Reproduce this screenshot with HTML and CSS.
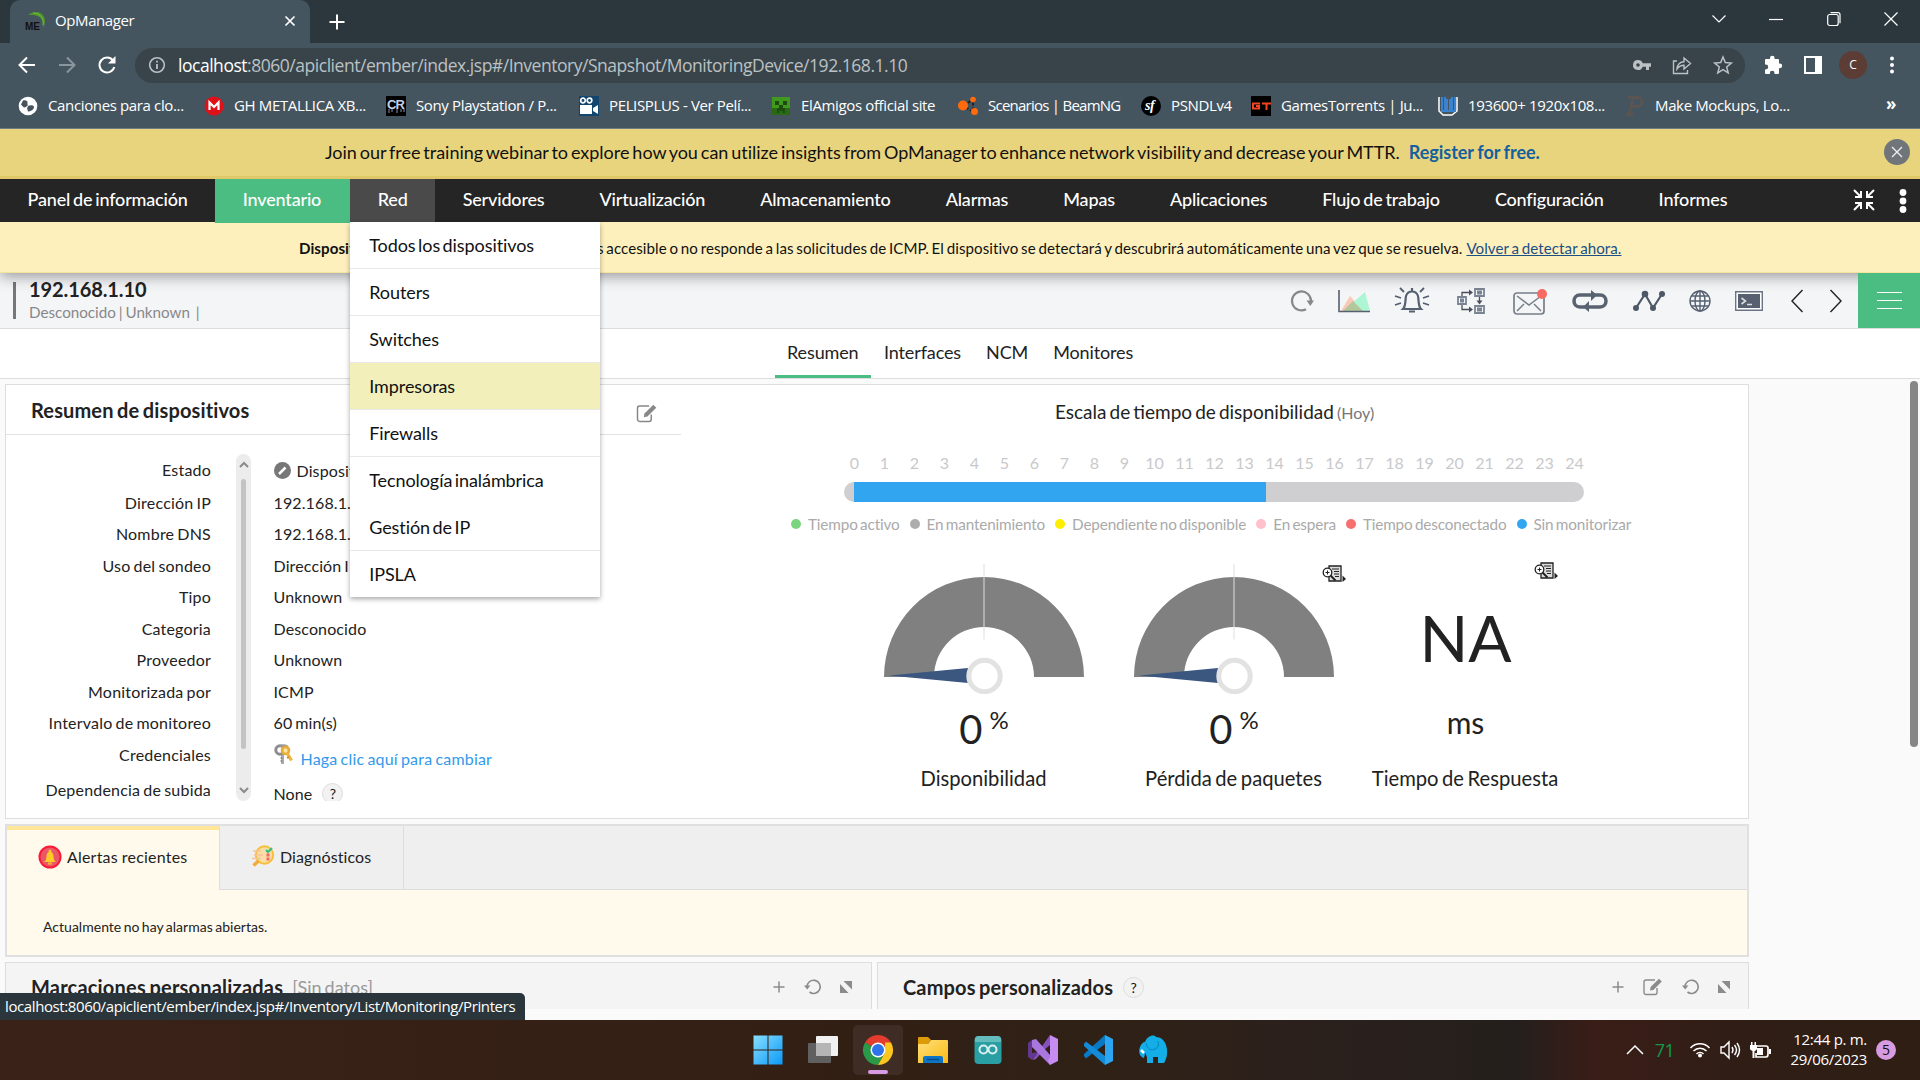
FILE: index.html
```html
<!DOCTYPE html>
<html lang="es">
<head>
<meta charset="utf-8">
<title>OpManager</title>
<link rel="stylesheet" href="styles.css">
</head>
<body>
<svg class="defs" width="0" height="0">
  <defs>
    <symbol id="edit" viewBox="0 0 20 18"><path d="M14 10v4.5a2 2 0 0 1-2 2H3a2 2 0 0 1-2-2V4a2 2 0 0 1 2-2h9" fill="none" stroke="currentColor" stroke-width="1.4"/><path d="M7 12.5l.6-3.4L16 .8l2.8 2.7-8.4 8.4z" fill="currentColor"/></symbol>
    <symbol id="undo" viewBox="0 0 18 18"><path d="M3 9a6.6 6.6 0 1 1 2.5 5" fill="none" stroke="currentColor" stroke-width="1.6"/><path d="M0 7.5h6.4L3.2 11.6z" fill="currentColor"/></symbol>
    <symbol id="expand" viewBox="0 0 12 12"><path d="M3.5 0H12v8.500zM0 3v9h8.500z" fill="currentColor"/></symbol>
    <symbol id="plus" viewBox="0 0 12 12"><path d="M6 .5v11M.5 6h11" stroke="currentColor" stroke-width="1.5"/></symbol>
    <symbol id="report" viewBox="0 0 24 18"><path d="M7 1h12v15H7z" fill="#ddd" stroke="#222" stroke-width="1.3"/><path d="M10 4h7M12 6.500h5M12 9h5M13 11.500h4" stroke="#222" stroke-width="1.2"/><circle cx="5.500" cy="7.500" r="4.300" fill="#fff" stroke="#222" stroke-width="1.300"/><path d="M5.500 5.500v4M3.500 7.500h4" stroke="#222"/><path d="M8.500 10.500l5 5" stroke="#222" stroke-width="2"/><path d="M20.500 10.500l3.500 3.500-3.500 3z" fill="#222"/></symbol>
    <symbol id="gauge" viewBox="0 0 200 130"><path d="M0 113a100 100 0 0 1 200 0h-50a50 50 0 0 0-100 0z" fill="#808080"/><path d="M100 0v75.500" stroke="#dedede"/><path d="M5 111.500l79-7.500v15z" fill="#3b5780"/><circle cx="100.500" cy="112" r="15.700" fill="#fff" stroke="#e2e2e2" stroke-width="5"/></symbol>
  </defs>
</svg>

<div class="tabstrip">
  <div class="tab">
    <svg width="22" height="22" viewBox="0 0 22 22"><path d="M3 5C10-1 20 2 20 11c0 3-1 5-2 7 1-6 0-14-15-13z" fill="#4c962b"/><path d="M8 3c8 0 11 6 10 12" fill="none" stroke="#79bb3d"/><text x="0" y="20" class="me">ME</text></svg>
    <span class="tab-title">OpManager</span>
    <svg width="12" height="12" viewBox="0 0 12 12"><path d="M1.500 1.500l9 9M10.500 1.500l-9 9" stroke="#fff" stroke-width="1.700"/></svg>
  </div>
  <svg class="newtab" width="16" height="16" viewBox="0 0 16 16"><path d="M8 .5v15M.5 8h15" stroke="#fff" stroke-width="2"/></svg>
  <div class="winctl">
    <svg width="14" height="14" viewBox="0 0 14 14"><path d="M.5 3.500L7 10l6.500-6.500"/></svg>
    <svg width="14" height="14" viewBox="0 0 14 14"><path d="M0 7.500h14"/></svg>
    <svg width="14" height="14" viewBox="0 0 14 14"><rect x=".7" y="2.500" width="10.500" height="11" rx="2"/><path d="M3.500.7h7.500a2 2 0 0 1 2 2v8.500"/></svg>
    <svg width="14" height="14" viewBox="0 0 14 14"><path d="M.5.5l13 13M13.500.5l-13 13"/></svg>
  </div>
</div>

<div class="toolbar">
  <div class="navbtns">
    <svg width="18" height="18" viewBox="0 0 18 18"><path d="M17 9H2M9 1.500L1.500 9 9 16.500" fill="none" stroke="#fff" stroke-width="2"/></svg>
    <svg width="18" height="18" viewBox="0 0 18 18"><path d="M1 9h15M9 1.500L16.500 9 9 16.500" fill="none" stroke="#8a969c" stroke-width="2"/></svg>
    <svg width="18" height="18" viewBox="0 0 18 18"><path d="M15 4.500A7.500 7.500 0 1 0 16.300 11" fill="none" stroke="#fff" stroke-width="2"/><path d="M17.500 0v7.500H10z" fill="#fff"/></svg>
  </div>
  <div class="omnibox">
    <svg width="18" height="18" viewBox="0 0 18 18"><circle cx="9" cy="9" r="7.300" fill="none" stroke="#bcc1c4" stroke-width="1.600"/><path d="M9 8v5M9 4.800v1.800" stroke="#bcc1c4" stroke-width="1.800"/></svg>
    <span class="url"><b>localhost</b>:8060/apiclient/ember/index.jsp#/Inventory/Snapshot/MonitoringDevice/192.168.1.10</span>
    <div class="omni-icons">
      <svg width="18" height="18" viewBox="0 0 18 18"><path fill="#bcc1c4" fill-rule="evenodd" d="M5 4a5 5 0 1 0 4.700 6.700H13V14h3v-3.300h2V7.300H9.700A5 5 0 0 0 5 4zm0 3.200a1.800 1.800 0 1 1 0 3.600 1.800 1.800 0 0 1 0-3.600z"/></svg>
      <svg width="20" height="20" viewBox="0 0 20 20"><path d="M5 6H1.500v12.500h14V15M5 14c.5-5 3-7 7-7.200V3l6.500 5.500-6.500 5.500v-3.700c-3 0-5 1-7 3.700z" fill="none" stroke="#bcc1c4" stroke-width="1.400"/></svg>
      <svg width="20" height="20" viewBox="0 0 20 20"><path d="M10 2l2.300 5.600 6 .5-4.600 3.900 1.500 5.900L10 14.700 4.800 17.900 6.300 12 1.700 8.100l6-.5z" fill="none" stroke="#bcc1c4" stroke-width="1.500"/></svg>
    </div>
  </div>
  <div class="ext">
    <svg width="20" height="20" viewBox="0 0 20 20"><path fill="#fff" d="M7 4V3a2.300 2.300 0 0 1 4.600 0v1H15a1 1 0 0 1 1 1v3.400h.8a2.400 2.400 0 0 1 0 4.800H16V18a1 1 0 0 1-1 1h-3.500v-1a2.300 2.300 0 0 0-4.600 0v1H3a1 1 0 0 1-1-1v-3.600h.8a2.400 2.400 0 0 0 0-4.800H2V5a1 1 0 0 1 1-1z"/></svg>
    <svg width="20" height="20" viewBox="0 0 20 20"><path d="M2 2h16v16H2z" fill="none" stroke="#fff" stroke-width="2"/><path d="M12 2h6v16h-6z" fill="#fff"/></svg>
    <span class="avatar">C</span>
    <svg width="6" height="20" viewBox="0 0 6 20"><g fill="#fff"><circle cx="3" cy="3.500" r="2"/><circle cx="3" cy="10" r="2"/><circle cx="3" cy="16.500" r="2"/></g></svg>
  </div>
</div>

<div class="bookmarks">
  <a><svg width="20" height="20" viewBox="0 0 20 20"><circle cx="10" cy="10" r="9.300" fill="#fff"/><path d="M5 4.500c3-.5 5 .5 4.500 2.500s1.500 2-1 3.500S6 12 3 8.500zM10 10c2-1 6-1 6 1s-2 4-5 4.500c-2 .3-1-2-2-3z" fill="#45545d"/></svg><span>Canciones para clo...</span></a>
  <a><svg width="20" height="20" viewBox="0 0 20 20"><circle cx="10" cy="10" r="9.500" fill="#e01019"/><path d="M5.500 14V6.500l4.500 4.500 4.500-4.500V14" fill="none" stroke="#fff" stroke-width="2.200"/></svg><span>GH METALLICA XB...</span></a>
  <a><svg width="20" height="20" viewBox="0 0 20 20"><path d="M0 0h20v20H0z" fill="#000"/><text x="1" y="13" class="cr">CR</text><path d="M3 13v4M6 13v3M11 13v4M15 13v3M18 13v3" stroke="#8795ab"/></svg><span>Sony Playstation / P...</span></a>
  <a><svg width="20" height="20" viewBox="0 0 20 20"><path d="M0 0h20v20H0z" fill="#12466e"/><g fill="#fff"><path d="M1 9h12v9H1zM14 12l5-3v9l-5-3z"/></g><g fill="none" stroke="#fff" stroke-width="1.700"><circle cx="4" cy="4.500" r="2.300"/><circle cx="10.500" cy="4.500" r="2.300"/></g></svg><span>PELISPLUS - Ver Pelí...</span></a>
  <a><svg width="20" height="20" viewBox="0 0 20 20"><path d="M1 1h18v18H1z" fill="#3f9a1d"/><path d="M1 12h18v7H1z" fill="#2b6a15"/><path d="M4 5h4v4H4zM12 5h4v4h-4zM8 9h4v3h2v5h-2v-2H8v2H6v-5h2z" fill="#1d4c10"/></svg><span>ElAmigos official site</span></a>
  <a><svg width="20" height="20" viewBox="0 0 20 20"><path d="M6 10L15 3v13z" fill="none" stroke="#222" stroke-width="2" stroke-dasharray="3 2"/><g fill="#ff6a0c"><circle cx="5" cy="9.500" r="5"/><circle cx="15" cy="3.500" r="2.800"/><circle cx="16.500" cy="15.500" r="3.500"/></g></svg><span class="tight">Scenarios | BeamNG</span></a>
  <a><svg width="20" height="20" viewBox="0 0 20 20"><circle cx="10" cy="10" r="10" fill="#000"/><text x="4" y="14" class="sf">sf</text></svg><span>PSNDLv4</span></a>
  <a><svg width="20" height="20" viewBox="0 0 20 20"><path d="M0 0h20v20H0z" fill="#000"/><path d="M9 7.500H2v5h6V10H5M11 7.500h9M15.500 7.500V14" fill="none" stroke="#f0451e" stroke-width="2"/></svg><span>GamesTorrents | Ju...</span></a>
  <a><svg width="20" height="20" viewBox="0 0 20 20"><path d="M1 1v14l4 4h9l5-4V1" fill="none" stroke="#fff" stroke-width="1.500"/><path d="M4 1v14h3V1M9 3v12h3V3M14 1v14h3V1" fill="none" stroke="#3c83cf" stroke-width="2"/></svg><span>193600+ 1920x108...</span></a>
  <a><svg width="20" height="20" viewBox="0 0 20 20"><path d="M3 1.500h10c6 0 5 9-1 9H6M8 2L4.500 18M1 18.500h7" fill="none" stroke="#5a5453" stroke-width="3"/></svg><span>Make Mockups, Lo...</span></a>
  <b class="more">»</b>
</div>

<div class="promo">
  <span class="promo-text">Join our free training webinar to explore how you can utilize insights from OpManager to enhance network visibility and decrease your MTTR.</span>
  <b>Register for free.</b>
  <svg class="promo-close" width="26" height="26" viewBox="0 0 26 26"><circle cx="13" cy="13" r="13" fill="#70757a"/><path d="M8 8l10 10M18 8L8 18" stroke="#eee" stroke-width="1.400"/></svg>
</div>

<div class="mainnav">
  <div class="navitem">Panel de información</div>
  <div class="navitem active">Inventario</div>
  <div class="navitem open">Red
    <div class="menu">
      <div>Todos los dispositivos</div><div>Routers</div><div>Switches</div><div class="hover">Impresoras</div><div>Firewalls</div><div class="noline">Tecnología inalámbrica</div><div>Gestión de IP</div><div>IPSLA</div>
    </div>
  </div>
  <div class="navitem">Servidores</div><div class="navitem">Virtualización</div><div class="navitem">Almacenamiento</div><div class="navitem">Alarmas</div><div class="navitem">Mapas</div><div class="navitem">Aplicaciones</div><div class="navitem">Flujo de trabajo</div><div class="navitem">Configuración</div><div class="navitem">Informes</div>
  <div class="navtools">
    <svg width="22" height="22" viewBox="0 0 22 22"><g fill="none" stroke="#fff" stroke-width="2"><path d="M1 1l6 6M2 8h6V2M21 1l-6 6M14 2v6h6M1 21l6-6M2 14h6v6M21 21l-6-6M20 14h-6v6"/></g></svg>
    <svg width="8" height="24" viewBox="0 0 8 24"><g fill="#fff"><circle cx="4" cy="3.500" r="3.400"/><circle cx="4" cy="12" r="3.400"/><circle cx="4" cy="20.500" r="3.400"/></g></svg>
  </div>
</div>

<div class="notice">
  <b>Dispositivo</b>
  <span>s accesible o no responde a las solicitudes de ICMP. El dispositivo se detectará y descubrirá automáticamente una vez que se resuelva.</span>
  <u>Volver a detectar ahora.</u>
</div>

<div class="devhead">
  <div class="devname"><strong>192.168.1.10</strong><span>Desconocido | Unknown &nbsp;|</span></div>
  <div class="devicons">
    <svg width="24" height="24" viewBox="0 0 24 24"><path d="M16 20.300A9.500 9.500 0 1 1 21 12" fill="none" stroke="#888" stroke-width="2.200"/><path d="M16.500 11.500H24l-3.700 5.500z" fill="#888"/></svg>
    <svg width="32" height="24" viewBox="0 0 32 24"><path d="M3 22L12 7l13 15z" fill="#f9c9b5"/><path d="M5 22L27 3l5 19z" fill="#aef5d5"/><path d="M5 22l10-10 10 10z" fill="#b3c79c"/><path d="M1 1v21.500h31" fill="none" stroke="#566071" stroke-width="1.600"/></svg>
    <svg width="34" height="28" viewBox="0 0 34 28"><path d="M8 22h18c-3-3-2-8-3-13-2-6-10-6-12 0-1 5 0 10-3 13zM17 4V1M14 24.500h6" fill="none" stroke="#566071" stroke-width="2.200"/><path d="M5 1l4 4M0 9l6 2M0 18l6-2M29 1l-4 4M34 9l-6 2M34 18l-6-2" stroke="#566071" stroke-width="1.800"/></svg>
    <svg width="28" height="26" viewBox="0 0 28 26"><g fill="none" stroke="#7b8492" stroke-width="1.800"><path d="M1 9h8v7H1zM18 1h9v7h-9zM18 18h9v7h-9zM3 11.500h4M3 13.500h4M20 3.500h5M20 5.500h5M20 20.500h5M20 22.500h5"/></g><path d="M5 8V4.500h8M5 17v4.500h8M22.500 9v4" fill="none" stroke="#4a505a" stroke-width="1.300"/><path d="M12 1.500l4 3-4 3zM12 18.500l4 3-4 3zM19.500 12.500h6l-3 4z" fill="#4a505a"/></svg>
    <svg width="32" height="28" viewBox="0 0 32 28"><rect x="1" y="6" width="30" height="21" rx="3" fill="none" stroke="#777f89" stroke-width="1.700"/><path d="M4 9l12 9L28 9M4 24l7-7M28 24l-7-7" fill="none" stroke="#777f89" stroke-width="1.500"/><circle cx="29" cy="7" r="5" fill="#f76b64"/></svg>
    <svg width="36" height="20" viewBox="0 0 36 20"><path d="M13 16H8c-8 0-8-12 0-12h14M23 4h5c8 0 8 12 0 12H14" fill="none" stroke="#596271" stroke-width="3.500"/><path d="M19-1l6 5-6 6zM17 10l-6 6 6 5z" fill="#596271"/></svg>
    <svg width="32" height="22" viewBox="0 0 32 22"><path d="M3 18l9-14 8 14 9-14" fill="none" stroke="#4d5766" stroke-width="2.200"/><g fill="#4d5766"><circle cx="3" cy="18" r="3"/><circle cx="12" cy="4" r="3.300"/><circle cx="20" cy="18" r="3"/><circle cx="29" cy="4" r="3"/></g></svg>
    <svg width="22" height="22" viewBox="0 0 22 22"><g fill="none" stroke="#566071" stroke-width="1.400"><circle cx="11" cy="11" r="10"/><ellipse cx="11" cy="11" rx="5" ry="10"/><path d="M11 1v20M1 11h20M2.500 6h17M2.500 16h17"/></g></svg>
    <svg width="28" height="20" viewBox="0 0 28 20"><path d="M.7.7h26.600v18.600H.7z" fill="#fff" stroke="#6a7484" stroke-width="1.400"/><path d="M3 3h22v14H3z" fill="#566071"/><path d="M6.500 7l4 3-4 3M12 13.500h5" fill="none" stroke="#ddd" stroke-width="1.600"/></svg>
    <svg width="14" height="24" viewBox="0 0 14 24"><path d="M12.500 1L2 12l10.500 11" fill="none" stroke="#222" stroke-width="1.400"/></svg>
    <svg width="14" height="24" viewBox="0 0 14 24"><path d="M1.500 1L12 12 1.500 23" fill="none" stroke="#222" stroke-width="1.400"/></svg>
  </div>
  <div class="burger"><i></i><i></i><i></i></div>
</div>

<div class="subtabs"><div class="on">Resumen</div><div>Interfaces</div><div>NCM</div><div>Monitores</div></div>

<div class="content">
  <section class="panel">
    <div class="summary">
      <div class="sumhead"><h2>Resumen de dispositivos</h2><svg width="22" height="19"><use href="#edit"/></svg></div>
      <div class="sumbody">
        <div class="col labels">
          <div class="first">Estado</div><div>Dirección IP</div><div>Nombre DNS</div><div>Uso del sondeo</div><div>Tipo</div><div>Categoria</div><div>Proveedor</div><div>Monitorizada por</div><div>Intervalo de monitoreo</div><div>Credenciales</div><div class="dep">Dependencia de subida</div>
        </div>
        <div class="vscroll">
          <svg width="10" height="7" viewBox="0 0 10 7"><path d="M1 6l4-4 4 4" fill="none" stroke="#8a8a8a" stroke-width="2"/></svg>
          <i></i>
          <svg width="10" height="7" viewBox="0 0 10 7"><path d="M1 1l4 4 4-4" fill="none" stroke="#8a8a8a" stroke-width="2"/></svg>
        </div>
        <div class="col values">
          <div class="first status"><svg width="17" height="17" viewBox="0 0 17 17"><circle cx="8.500" cy="8.500" r="8.500" fill="#777"/><path d="M5 12l6.500-6.500" stroke="#fff" stroke-width="2.500"/></svg>Dispositivo</div><div>192.168.1.10</div><div>192.168.1.10</div><div>Dirección IP</div><div>Unknown</div><div>Desconocido</div><div>Unknown</div><div>ICMP</div><div>60 min(s)</div>
          <div class="cred"><svg width="20" height="21" viewBox="0 0 20 21"><path d="M8.500 9v11" stroke="#aaa" stroke-width="3"/><path d="M6.500 14h2M6.500 17h2" stroke="#888" stroke-width="1.500"/><circle cx="6" cy="6" r="4.200" fill="none" stroke="#8d8d8d" stroke-width="3"/><path d="M6 2q5-2 8 1" fill="none" stroke="#999" stroke-width="2"/><circle cx="11.500" cy="6.500" r="3.500" fill="#fbe3a4" stroke="#e8ab33" stroke-width="2.600"/><path d="M13 9l4.500 7.500" stroke="#efb43f" stroke-width="3.200"/><path d="M13 14l2-1" stroke="#c98a1b" stroke-width="1.500"/></svg><a>Haga clic aquí para cambiar</a></div>
          <div class="none">None<span class="help">?</span></div>
        </div>
      </div>
    </div>
    <div class="avail">
      <h3>Escala de tiempo de disponibilidad <small>(Hoy)</small></h3>
      <div class="hours"><i>0</i><i>1</i><i>2</i><i>3</i><i>4</i><i>5</i><i>6</i><i>7</i><i>8</i><i>9</i><i>10</i><i>11</i><i>12</i><i>13</i><i>14</i><i>15</i><i>16</i><i>17</i><i>18</i><i>19</i><i>20</i><i>21</i><i>22</i><i>23</i><i>24</i></div>
      <div class="bar"><i style="width:412px"></i></div>
      <div class="legend"><span class="up">Tiempo activo</span><span class="mt">En mantenimiento</span><span class="dp">Dependiente no disponible</span><span class="hold">En espera</span><span class="down">Tiempo desconectado</span><span class="un">Sin monitorizar</span></div>
      <div class="gauges">
        <div class="g"><svg width="200" height="130"><use href="#gauge"/></svg><div class="val">0<sup>%</sup></div><p>Disponibilidad</p></div>
        <div class="g"><svg width="200" height="130"><use href="#gauge"/></svg><svg class="rep r1" width="24" height="18"><use href="#report"/></svg><div class="val">0<sup>%</sup></div><p>Pérdida de paquetes</p></div>
        <div class="g na"><svg class="rep r2" width="24" height="18"><use href="#report"/></svg><div class="big">NA</div><div class="ms">ms</div><p>Tiempo de Respuesta</p></div>
      </div>
    </div>
  </section>

  <section class="alerts">
    <div class="atabs">
      <div class="atab on"><svg width="24" height="24" viewBox="0 0 24 24"><circle cx="12" cy="12" r="10.500" fill="#ea5868" stroke="#fb1a36" stroke-width="2"/><path d="M6 17c3-2 2-5 3-8s5-3 6 0 0 6 3 8z" fill="#ffc928"/><circle cx="12" cy="6" r="1.500" fill="#ffc928"/><path d="M10 17.500h4v2h-4z" fill="#f9b42c"/></svg>Alertas recientes</div>
      <div class="atab two"><svg width="24" height="24" viewBox="0 0 24 24"><circle cx="13.500" cy="10" r="8.700" fill="#f9dfa6" stroke="#f6bf3a" stroke-width="2"/><path d="M7.500 16l-5 4.500" stroke="#f3ab35" stroke-width="3.500"/><path d="M2 6h8M3 10h9M1 13.500h9" stroke="#f6c39b" stroke-width="1.300"/><path d="M15 5l2 2 4-4" fill="none" stroke="#2fbf7e" stroke-width="2"/><path d="M15.500 10h3M15.500 14h3" stroke="#f7626e" stroke-width="3"/></svg>Diagnósticos</div>
      <div class="rest"></div>
    </div>
    <p>Actualmente no hay alarmas abiertas.</p>
  </section>

  <div class="widgets">
    <section class="w1"><h2>Marcaciones personalizadas</h2><small>[Sin datos]</small><span class="grow"></span><svg width="12" height="12"><use href="#plus"/></svg><svg class="s2" width="18" height="18"><use href="#undo"/></svg><svg class="s3" width="12" height="12"><use href="#expand"/></svg></section>
    <section class="w2"><h2>Campos personalizados</h2><span class="help">?</span><span class="grow"></span><svg width="12" height="12"><use href="#plus"/></svg><svg class="s1" width="20" height="18"><use href="#edit"/></svg><svg class="s2" width="18" height="18"><use href="#undo"/></svg><svg class="s3" width="12" height="12"><use href="#expand"/></svg></section>
  </div>
  <div class="pagescroll"></div>
  <div class="linkstatus">localhost:8060/apiclient/ember/index.jsp#/Inventory/List/Monitoring/Printers</div>
</div>

<div class="taskbar">
  <div class="apps">
    <svg width="30" height="30" viewBox="0 0 30 30"><defs><linearGradient id="wg" gradientUnits="userSpaceOnUse" x2="30" y2="30"><stop stop-color="#8be0ff"/><stop offset="1" stop-color="#0897f7"/></linearGradient></defs><path d="M.5.5h14v14H.5zM15.500.5h14v14h-14zM.5 15.500h14v14H.5zM15.500 15.500h14v14h-14z" fill="url(#wg)"/></svg>
    <svg width="30" height="30" viewBox="0 0 30 30"><rect y="8" width="23" height="20" rx="1" fill="#606060"/><rect x="8" y="1" width="22" height="20" rx="1" fill="#f1f1f1"/><path d="M8 8h15v13H8z" fill="#b5b5b5"/></svg>
    <div class="current"><svg width="30" height="30" viewBox="0 0 30 30"><path d="M15 15L2 7.500a15 15 0 0 1 26 0z" fill="#e33b2e"/><path d="M15 15L2 7.500A15 15 0 0 0 15 30l6.500-11.500z" fill="#2a9a48"/><path d="M15 30l6.500-11.500L22 7.500h6A15 15 0 0 1 15 30z" fill="#fcc61f"/><circle cx="15" cy="15" r="7.500" fill="#fff"/><circle cx="15" cy="15" r="6" fill="#2f73ea"/></svg></div>
    <svg width="30" height="30" viewBox="0 0 30 30"><defs><linearGradient id="fg" x2="1" y2="1"><stop stop-color="#ffe07a"/><stop offset="1" stop-color="#fbb914"/></linearGradient></defs><path d="M0 3q0-1 1-1h9l3 3-3 4H0z" fill="#dd9b08"/><path d="M0 9h10l3-4h16q1 0 1 1v22H0z" fill="url(#fg)"/><path d="M5 28v-5q0-2 2-2h16q2 0 2 2v5z" fill="#0e74c4"/><path d="M9 24.500h12" stroke="#074c86" stroke-width="1.500"/></svg>
    <svg width="30" height="30" viewBox="0 0 30 30"><rect x="1.500" y="1" width="27" height="28" rx="4" fill="#2a9fa3"/><path d="M2 5q0-4 4-4h18q4 0 4 4v2H2z" fill="#64bcbd"/><g fill="none" stroke="#d9f0ef" stroke-width="2"><circle cx="10.500" cy="14.500" r="4"/><circle cx="19.500" cy="14.500" r="4"/></g></svg>
    <svg width="30" height="30" viewBox="0 0 30 30"><path d="M0 8l4-3 6 8-6-1v6l6-1-6 8-4-3z" fill="#63398f"/><path d="M5 24L22 0v10l-6 5-8 9-3 1z" fill="#8551bd"/><path d="M4 5l4-1 14 16v10L4 12z" fill="#a975df"/><path d="M22 0l8 4v22l-8 4-2-4 2-4z" fill="#c78cf2"/></svg>
    <svg width="30" height="30" viewBox="0 0 30 30"><path d="M1 21l2 2.500L22 9V0L1 19z" fill="#0879c5"/><path d="M1 9l2-2.500L22 21v9L1 11z" fill="#138bd7"/><path d="M22 0l8 4v22l-8 4z" fill="#2da6f2"/></svg>
    <svg width="30" height="30" viewBox="0 0 30 30"><path d="M7 7C9 1 16-1 18 2c9 0 12 11 11 17 0 4-3 9-3 9h-6v-6h-5v6H9v-6c-1-2-1-3-2-4 0 2-1 4-1 5-4-1-6-6-4-11 1-3 3-5 5-5z" fill="#13aee8"/><path d="M8 8c1 6 5 8 9 6 3-1 4-4 3-8" fill="none" stroke="#0785be"/><path d="M3 15l3 3" stroke="#fff" stroke-width="2.500"/></svg>
  </div>
  <div class="tray">
    <svg width="18" height="10" viewBox="0 0 18 10"><path d="M1 9l8-8 8 8" fill="none" stroke="#fff" stroke-width="1.500"/></svg>
    <b>71</b>
    <svg width="20" height="16" viewBox="0 0 20 16"><g fill="none" stroke="#fff" stroke-width="1.500"><path d="M.5 6a13 13 0 0 1 19 0M3.500 9a9 9 0 0 1 13 0M6.500 12a5 5 0 0 1 7 0"/></g><circle cx="10" cy="13.500" r="2" fill="#fff"/></svg>
    <svg width="20" height="18" viewBox="0 0 20 18"><g fill="none" stroke="#fff" stroke-width="1.400"><path d="M1 6h3l5-5v16l-5-5H1zM12 6q2 3 0 6M14.500 4q4 5 0 10M17 2q5 7 0 14"/></g></svg>
    <svg width="21" height="17" viewBox="0 0 21 17"><path d="M7 4h9q2 0 2 2v6q0 3-2 3H6v-4" fill="none" stroke="#fff" stroke-width="1.700"/><path d="M19 7h2v5h-2zM7 6h6v7H7zM0 3h7v4q-1 2-2.500 2v7h-2V9Q0 8 0 7zM1 0h1.500v3H1zM4.500 0H6v3H4.500z" fill="#fff"/></svg>
    <div class="clock"><span>12:44 p. m.</span><span>29/06/2023</span></div>
    <span class="badge">5</span>
  </div>
</div>
</body>
</html>
```

FILE: styles.css
```css
* { box-sizing: border-box; }
body { margin: 0; width: 1920px; height: 1080px; overflow: hidden; display: flex; flex-direction: column; font-family: "Lato", sans-serif; color: #222; background: #fafafa; white-space: nowrap; word-spacing: -1.500px; }
.defs { position: absolute; }
svg { display: block; flex: none; overflow: visible; }
h2, h3, p { margin: 0; font-weight: 400; }
i { font-style: normal; }

/* Browser frame */
.tabstrip, .toolbar, .bookmarks, .linkstatus, .taskbar { font-family: "Open Sans", sans-serif; color: #fff; word-spacing: 0; }
.tabstrip { height: 43px; flex: none; background: #2c373d; display: flex; align-items: center; padding-left: 10px; }
.tab { width: 300px; height: 43px; background: #45555f; border-radius: 10px 10px 0 0; display: flex; align-items: center; padding: 0 14px 2px 15px; }
.tab-title { flex: 1; margin-left: 8px; font-size: 15px; letter-spacing: -0.4px; position: relative; top: -1px; }
.me { font: bold 10px "Liberation Sans", sans-serif; fill: #111; }
.newtab { margin-left: 19px; }
.winctl { margin-left: auto; display: flex; gap: 43.500px; padding: 0 22px 6px 0; }
.winctl path, .winctl rect { fill: none; stroke: #fff; stroke-width: 1.200; }
.toolbar { height: 44px; flex: none; background: #45555f; display: flex; align-items: center; padding-left: 18px; }
.navbtns { display: flex; gap: 22px; width: 117px; }
.omnibox { width: 1610px; height: 35px; border-radius: 18px; background: #38444a; display: flex; align-items: center; padding: 0 12px 0 13px; }
.url { margin-left: 12px; font-size: 17.500px; letter-spacing: -0.470px; color: #bcc1c4; flex: 1; }
.url b { font-weight: 400; color: #fff; }
.omni-icons { display: flex; gap: 21px; align-items: center; }
.ext { display: flex; align-items: center; margin-left: 18px; }
.ext svg + svg { margin-left: 20px; }
.avatar { width: 28px; height: 28px; margin: 0 22px 0 16px; border-radius: 50%; background: #5c3d35; font-size: 12px; line-height: 28px; text-align: center; }
.avatar + svg { margin-left: 0; }
.bookmarks { height: 42px; flex: none; background: #45555f; border-bottom: 1px solid #6f7c84; display: grid; grid-template-columns: 186px 182px 193px 192px 187px 183px 110px 187px 187px 261px auto; align-items: center; padding: 0 0 4px 18px; font-size: 15px; letter-spacing: -0.360px; }
.bookmarks a { display: flex; gap: 10px; align-items: center; }
.bookmarks span { position: relative; top: -1px; }
.bookmarks .tight { letter-spacing: -0.750px; }
.more { font-size: 17px; line-height: 18px; margin-top: -3px; }
.cr { font: bold 13px "Liberation Sans", sans-serif; fill: #c3d2ea; letter-spacing: -1px; }
.sf { font: italic bold 14px "Liberation Serif", serif; fill: #fff; }

/* Promotional strip */
.promo { height: 50px; flex: none; background: #e9d47e; border-bottom: 3px solid #dfc868; display: flex; align-items: center; padding: 0 10px 2px 325px; font-size: 18px; color: #111; letter-spacing: -0.030px; word-spacing: -1.600px; }
.promo b { margin-left: 9px; color: #14609f; word-spacing: -0.800px; }
.promo-close { margin-left: auto; }

/* Main navigation */
.mainnav { height: 43px; flex: none; background: #252525; color: #fff; display: flex; font-size: 18px; font-weight: 500; position: relative; z-index: 5; letter-spacing: -0.170px; word-spacing: -1.500px; }
.navitem { padding: 0 27.500px; line-height: 41px; position: relative; }
.active { background: #4bbd82; height: 44px; width: 135px; }
.open { background: #4a4a4a; }
.menu { position: absolute; left: 0; top: 43px; width: 250px; background: #fff; color: #111; font-weight: 400; letter-spacing: -0.080px; word-spacing: -2px; box-shadow: 0 2px 5px rgba(0,0,0,.35); }
.menu div { height: 47px; line-height: 47px; padding-left: 19px; border-bottom: 1px solid #e8e8e8; }
.menu .hover { background: #f3efbb; }
.menu .noline { border-color: transparent; }
.menu div:last-child { height: 46px; border: 0; }
.navtools { margin: 10px 13px 0 auto; display: flex; gap: 24px; }

/* Unreachable device notice */
.notice { height: 51px; flex: none; background: #fef0bc; border-bottom: 1px solid #f4e49d; box-shadow: 0 3px 14px rgba(0,0,0,.4); position: relative; z-index: 2; display: flex; align-items: center; padding: 2px 0 0 299px; font-size: 15.100px; letter-spacing: .070px; word-spacing: -1.200px; color: #111; }
.notice b { width: 298px; }
.notice u { margin-left: 4px; color: #1b4f85; }

/* Device header */
.devhead { height: 56px; flex: none; background: #f4f5f7; border-bottom: 1px solid #ddd; display: flex; align-items: center; padding-left: 13px; position: relative; }
.devname { height: 37px; border-left: 3px solid #777; padding-left: 13px; display: flex; flex-direction: column; justify-content: space-between; }
.devname strong { font-size: 20px; line-height: 14px; letter-spacing: -0.100px; }
.devname span { font-size: 15.200px; line-height: 14px; color: #888; word-spacing: -1px; }
.devicons { margin: 0 4px 0 auto; display: grid; grid-template-columns: 52px 52px 64px 54px 62px 60px 58px 44px 54px 42px 36px; justify-items: center; align-items: center; }
.burger { position: relative; z-index: 3; width: 62px; height: 55px; background: #4bbd82; display: flex; flex-direction: column; justify-content: center; gap: 7px; align-items: center; }
.burger i { width: 25px; height: 1px; background: #fff; }
.subtabs { height: 50px; flex: none; background: #fff; border-bottom: 1px solid #ddd; display: flex; gap: 3px; padding-left: 775px; font-size: 18px; line-height: 47px; letter-spacing: -0.120px; }
.subtabs div { padding: 0 11px; }
.subtabs .on { border-bottom: 3px solid #4bbd82; width: 96px; padding: 0 12px; margin-right: -1px; }

/* Dashboard */
.content { height: 641px; flex: none; position: relative; padding: 5px 0 0 5px; overflow: hidden; }
.panel { width: 1744px; height: 435px; border: 1px solid #dedede; background: #fff; display: flex; }
.summary { width: 675px; }
.sumhead { height: 50px; border-bottom: 1px solid #e2e2e2; padding: 0 23px 0 25px; display: flex; justify-content: space-between; align-items: center; }
h2 { font-size: 20px; font-weight: 700; color: #222; letter-spacing: .130px; }
.sumhead svg { color: #888; margin-top: 8px; }
.sumbody { display: flex; margin-top: 19px; height: 347px; overflow: hidden; font-size: 16px; letter-spacing: .2px; word-spacing: -1.200px; }
.col > div { height: 31.550px; line-height: 31.550px; }
.col .first { height: 32.600px; }
.labels { width: 205px; text-align: right; }
.labels .dep { margin-top: 3px; }
.vscroll { width: 15px; height: 347px; margin: 0 22.500px 0 25px; border-radius: 8px; background: #ececec; display: flex; flex-direction: column; align-items: center; padding: 7px 0; }
.vscroll i { width: 5px; height: 270px; border-radius: 3px; background: #c3c3c3; margin: 11px 0 auto; }
.values { letter-spacing: .120px; }
.values .status { display: flex; align-items: center; gap: 6px; }
.cred { display: flex; gap: 7px; }
.cred svg { margin-top: 5px; }
.cred a { color: #3499ea; line-height: 40px; letter-spacing: .2px; }
.col > .none { display: flex; align-items: center; height: 22px; line-height: 22px; margin-top: 12px; }
.help { width: 21px; height: 21px; border-radius: 50%; background: #f2f2f2; border: 1px solid #ddd; margin-left: 10px; text-align: center; font-size: 14px; line-height: 19px; color: #111; }
.avail { width: 1066px; }
.avail h3 { font-size: 19px; line-height: 24px; padding: 15px 0 0 374px; word-spacing: -1.800px; }
.avail h3 small { font-size: 16px; color: #777; }
.hours { display: flex; margin: 28px 0 0 158.500px; font-size: 16px; line-height: 20px; color: #c9c9cb; }
.hours i { width: 30px; text-align: center; }
.bar { width: 740px; height: 20px; margin: 9px 0 0 163px; border-radius: 10px; background: #cfcfd1; padding-left: 10px; }
.bar i { display: block; height: 20px; background: #32a5f0; }
.legend { display: flex; gap: 10px; margin: 12px 0 0 110px; font-size: 15.300px; letter-spacing: -0.150px; line-height: 20px; color: #aaa; word-spacing: -1.400px; }
.legend span { display: flex; align-items: center; }
.legend span::before { content: ""; width: 10px; height: 10px; border-radius: 50%; margin-right: 7px; background: #7bd47e; }
.legend .mt::before { background: #adadad; }
.legend .dp::before { background: #ffee00; }
.legend .hold::before { background: #ffc0cb; }
.legend .down::before { background: #f76f6f; }
.legend .un::before { background: #32a5f0; }
.gauges { display: flex; padding-left: 178px; margin-top: 30px; }
.g { width: 250px; height: 230px; display: flex; flex-direction: column; align-items: center; position: relative; }
.val { font-size: 40px; line-height: 48px; margin-top: 11px; }
.val sup { font-size: 24px; line-height: 0; margin-left: 7px; vertical-align: 15px; }
.g p { font-size: 20.200px; line-height: 24px; margin-top: auto; margin-bottom: 4px; padding-right: 1px; word-spacing: -1.600px; }
.rep { position: absolute; }
.r1 { left: 213px; top: 1px; }
.r2 { left: 175px; top: -2px; }
.na { width: 214px; }
.na p { padding-right: 2px; }
.big { font-size: 64px; line-height: 76px; margin-top: 36px; padding-right: 1px; }
.ms { font-size: 30px; line-height: 36px; margin-top: 28px; padding-right: 1px; }

.alerts { width: 1744px; height: 133px; margin-top: 5px; border: 2px solid #e0e0e0; background: #fffaec; font-size: 16px; letter-spacing: .2px; word-spacing: -0.300px; }
.atabs { display: flex; height: 64px; }
.atab { display: flex; align-items: center; gap: 5px; border-right: 1px solid #ddd; padding-bottom: 2px; }
.atab.on { width: 213px; padding-left: 31px; border-top: 4px solid #ffe699; padding-bottom: 7px; }
.atab.two { width: 184px; padding-left: 31px; letter-spacing: .1px; background: #efefef; border-bottom: 1px solid #ddd; }
.rest { flex: 1; background: #efefef; border-bottom: 1px solid #ddd; }
.alerts p { font-size: 14px; letter-spacing: .020px; word-spacing: -1.200px; line-height: 20px; padding: 27px 0 0 36px; }

.widgets { display: flex; gap: 5px; margin-top: 5px; height: 47px; overflow: hidden; }
.widgets section { height: 60px; background: #f4f4f4; border: 1px solid #ddd; display: flex; align-items: center; padding: 0 19px 11px 25px; color: #8b8b8b; }
.w1 { width: 867px; }
.w2 { width: 872px; }
.widgets .w2 { padding-right: 18px; }
.w1 h2 { letter-spacing: .200px; }
.widgets small { font-size: 18px; margin-left: 9px; color: #999; }
.grow { flex: 1; }
.widgets .help { margin-left: 10px; margin-top: 2px; }
.s1 { margin-left: 19px; }
.s2 { margin-left: 19px; }
.s3 { margin-left: 18px; }
.pagescroll { position: absolute; left: 1910px; top: 2px; width: 8px; height: 366px; border-radius: 4px; background: #868686; }
.linkstatus { position: absolute; left: 0; bottom: 0; width: 525px; height: 27px; line-height: 26px; padding-left: 5px; background: #2b363c; border-radius: 0 5px 0 0; font-size: 15px; letter-spacing: -0.390px; }

/* System taskbar */
.taskbar { height: 60px; flex: none; background: linear-gradient(90deg, #3b2218, #321f14 45%, #2f2116 58%, #2a201d 70%, #241f1c 79%, #3a1d17 83%, #301e16 90%, #2e1e13); display: flex; align-items: center; padding-left: 752.500px; }
.apps { display: flex; align-items: center; gap: 25px; }
.current { width: 50px; height: 50px; margin: 0 -10px; border-radius: 5px; background: #3e2c25; display: flex; justify-content: center; align-items: center; position: relative; }
.current::after { content: ""; position: absolute; left: 15px; top: 45px; width: 20px; height: 4px; border-radius: 2px; background: #d89ae0; }
.tray { margin-left: auto; display: flex; align-items: center; padding-right: 24px; }
.tray b { font-weight: 400; font-size: 18px; color: #12984a; margin: 0 16px 0 11px; letter-spacing: -0.700px; }
.tray svg + svg { margin-left: 10px; }
.clock { width: 86px; margin: -2px 0 0 10px; display: flex; flex-direction: column; text-align: right; font-size: 15px; line-height: 20px; letter-spacing: -0.300px; }
.badge { width: 20px; height: 20px; margin-left: 9px; border-radius: 50%; background: #d89ae0; color: #111; font-size: 14px; line-height: 20px; text-align: center; }
```
